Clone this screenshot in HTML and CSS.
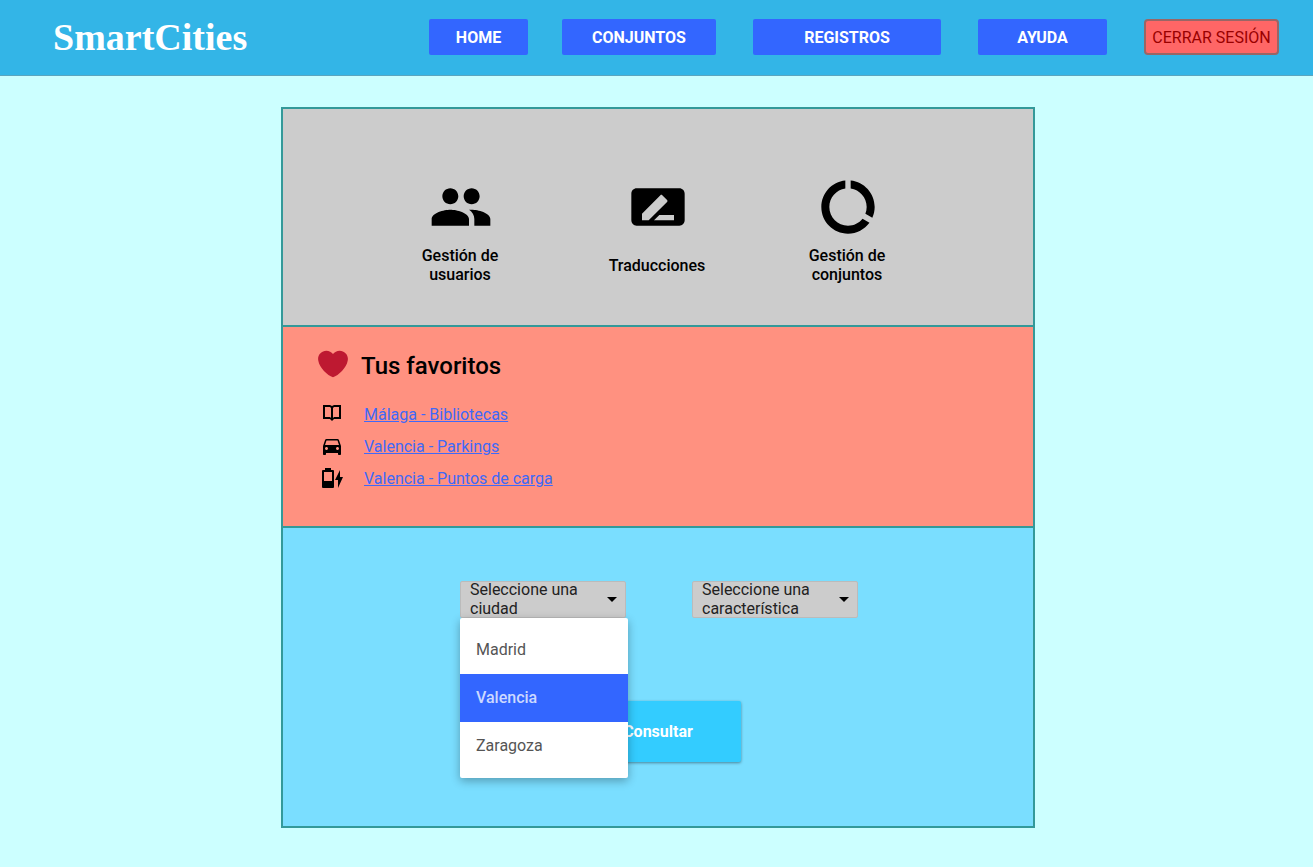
FILE: index.html
```html
<!DOCTYPE html>
<html lang="es">
<head>
<meta charset="utf-8">
<meta name="viewport" content="width=device-width, initial-scale=1">
<title>SmartCities</title>
<link rel="stylesheet" href="styles.css">
</head>
<body>
<header class="topbar">
  <h1 class="brand">SmartCities</h1>
  <nav class="nav">
    <div class="nav-group">
      <button class="nav-btn nav-home" type="button">HOME</button>
      <button class="nav-btn nav-sets" type="button">CONJUNTOS</button>
    </div>
    <button class="nav-btn nav-records" type="button">REGISTROS</button>
    <button class="nav-btn nav-help" type="button">AYUDA</button>
    <button class="logout" type="button">CERRAR SESIÓN</button>
  </nav>
</header>
<main class="page">
  <div class="board">
    <section class="tools">
      <div class="tool">
        <svg class="tool-icon" viewBox="0 0 24 24" aria-hidden="true"><path d="M16 11c1.660 0 2.990-1.340 2.990-3S17.660 5 16 5s-3 1.340-3 3 1.340 3 3 3zm-8 0c1.660 0 2.990-1.340 2.990-3S9.660 5 8 5 5 6.340 5 8s1.340 3 3 3zm0 2c-2.330 0-7 1.170-7 3.500V19h14v-2.500c0-2.330-4.670-3.500-7-3.500zm8 0c-.29 0-.62.02-.97.05 1.160.84 1.970 1.970 1.970 3.450V19h6v-2.500c0-2.330-4.670-3.500-7-3.500z"/></svg>
        <span class="tool-label">Gestión de usuarios</span>
      </div>
      <div class="tool">
        <svg class="tool-icon" viewBox="0 0 24 24" aria-hidden="true"><path fill-rule="evenodd" d="M4 5h16c1.100 0 2 .9 2 2v10c0 1.100-.9 2-2 2H4c-1.100 0-2-.9-2-2V7c0-1.100.9-2 2-2zM6 17h2.500l6.900-6.900c.2-.2.2-.5 0-.7l-1.800-1.800c-.2-.2-.5-.2-.7 0L6 14.500zM18 17v-2h-5.500l-2 2z"/></svg>
        <span class="tool-label">Traducciones</span>
      </div>
      <div class="tool">
        <svg class="tool-icon" viewBox="0 0 24 24" aria-hidden="true"><path d="M13 2.050v3.030c3.390.49 6 3.390 6 6.920 0 .9-.18 1.750-.48 2.540l2.600 1.530c.56-1.240.88-2.620.88-4.070 0-5.180-3.950-9.450-9-9.950zM12 19c-3.870 0-7-3.130-7-7 0-3.530 2.610-6.430 6-6.920V2.050c-5.060.5-9 4.760-9 9.950 0 5.520 4.470 10 9.990 10 3.310 0 6.240-1.610 8.060-4.090l-2.600-1.530C16.170 17.980 14.210 19 12 19z"/></svg>
        <span class="tool-label">Gestión de conjuntos</span>
      </div>
    </section>
    <section class="favorites">
      <div class="fav-head">
        <svg class="heart" viewBox="0 0 36 36" aria-hidden="true"><path d="M35.885 11.833c0-5.450-4.418-9.868-9.867-9.868-3.308 0-6.227 1.633-8.018 4.129-1.791-2.496-4.710-4.129-8.017-4.129-5.450 0-9.868 4.417-9.868 9.868 0 .772.098 1.520.266 2.241C1.751 22.587 11.216 31.568 18 34.034c6.783-2.466 16.249-11.447 17.617-19.959.17-.721.268-1.469.268-2.242z"/></svg>
        <h2 class="fav-title">Tus favoritos</h2>
      </div>
      <ul class="fav-list">
        <li class="fav"><svg class="fav-icon" viewBox="0 0 24 24" aria-hidden="true"><path fill-rule="evenodd" d="M3 3h7l2 1 2-1h7v14h-7l-2 2-2-2H3zM5 5v10h5l1 1V6l-1-1zM19 5h-5l-1 1v10l1-1h5z"/></svg><a class="fav-link" href="#">Málaga - Bibliotecas</a></li>
        <li class="fav"><svg class="fav-icon" viewBox="0 0 24 24" aria-hidden="true"><path d="M18.920 6.010C18.720 5.420 18.160 5 17.500 5h-11c-.66 0-1.210.42-1.420 1.010L3 12v8c0 .55.45 1 1 1h1c.55 0 1-.45 1-1v-1h12v1c0 .55.45 1 1 1h1c.55 0 1-.45 1-1v-8l-2.080-5.990zM6.500 16c-.83 0-1.500-.67-1.500-1.500S5.670 13 6.500 13s1.500.67 1.500 1.500S7.330 16 6.500 16zm11 0c-.83 0-1.500-.67-1.500-1.500s.67-1.500 1.500-1.500 1.500.67 1.500 1.500-.67 1.500-1.500 1.500zM5 11l1.500-4.500h11L19 11H5z"/></svg><a class="fav-link" href="#">Valencia - Parkings</a></li>
        <li class="fav"><svg class="fav-icon" viewBox="0 0 24 24" aria-hidden="true"><path fill-rule="evenodd" d="M5 2h6v2h2q1 0 1 1v16q0 1-1 1H3q-1 0-1-1V5q0-1 1-1h2zM4 6v9h8V6z"/><path d="M20 4v7h3l-5 11v-8h-3z"/></svg><a class="fav-link" href="#">Valencia - Puntos de carga</a></li>
      </ul>
    </section>
    <section class="query">
      <div class="pickers">
        <div class="picker">
          <label class="picker-label" for="city">Seleccione una ciudad</label>
          <select class="picker-select" id="city"><option></option><option>Madrid</option><option>Valencia</option><option>Zaragoza</option></select>
          <svg class="caret" viewBox="0 0 10 5" aria-hidden="true"><path d="M0 0h10L5 5z"/></svg>
          <ul class="menu" role="listbox" aria-label="Ciudades">
            <li class="menu-item" role="option" aria-selected="false">Madrid</li>
            <li class="menu-item menu-item-active" role="option" aria-selected="true">Valencia</li>
            <li class="menu-item" role="option" aria-selected="false">Zaragoza</li>
          </ul>
        </div>
        <div class="picker">
          <label class="picker-label" for="feature">Seleccione una característica</label>
          <select class="picker-select" id="feature"><option></option></select>
          <svg class="caret" viewBox="0 0 10 5" aria-hidden="true"><path d="M0 0h10L5 5z"/></svg>
        </div>
      </div>
      <button class="submit" type="button">Consultar</button>
    </section>
  </div>
</main>
</body>
</html>
```
FILE: styles.css
```css
* { box-sizing: border-box; }
body {
  margin: 0;
  min-height: 100vh;
  background: #ccffff;
  color: #000;
  font: 16px/19px Roboto, sans-serif;
}
button { font: inherit; cursor: pointer; }
ul { list-style: none; margin: 0; padding: 0; }

.topbar {
  display: flex;
  align-items: center;
  justify-content: space-between;
  height: 76px;
  padding: 0 34px 2px 53px;
  background: #33b5e7;
  border-bottom: 1px solid #5ba5bf;
}
.brand {
  margin: 0;
  color: #fff;
  font: bold 38px/44px "Liberation Serif", serif;
}
.nav { display: flex; gap: 37px; }
.nav-group { display: flex; gap: 34px; }
.nav-btn {
  height: 36px;
  padding: 1px 0 0;
  border: 0;
  border-radius: 2px;
  background: #3366ff;
  color: #fff;
  font-weight: 700;
}
.nav-home { width: 99px; }
.nav-sets { width: 154px; }
.nav-records { width: 188px; }
.nav-help { width: 129px; }
.logout {
  width: 135px;
  height: 36px;
  padding: 1px 0 0;
  border: 2px solid #996666;
  border-radius: 4px;
  background: #ff6666;
  color: #990000;
  white-space: nowrap;
}

.page { padding: 31px 0 39px 3px; }
.board {
  max-width: 754px;
  margin: 0 auto;
  border: 2px solid #339999;
}
.tools {
  display: grid;
  grid-template-columns: 200px 194px 186px;
  padding: 66px 0 41px 78px;
  background: #cccccc;
}
.tool {
  display: flex;
  flex-direction: column;
  align-items: center;
  gap: 7px;
}
.tool-icon { width: 64px; height: 64px; }
.tool-label {
  display: flex;
  align-items: center;
  width: 100px;
  min-height: 38px;
  padding-right: 2px;
  justify-content: center;
  text-align: center;
  font-weight: 500;
}

.favorites {
  padding: 22px 35px 32px;
  border-top: 2px solid #339999;
  background: #ff9180;
}
.fav-head { display: flex; gap: 13px; }
.heart { width: 30px; height: 30px; fill: #be1931; }
.fav-title {
  margin: 0;
  padding-top: 3px;
  font-size: 24px;
  font-weight: 500;
  line-height: 28px;
}
.fav-list { padding: 18px 0 0 2px; }
.fav {
  display: flex;
  align-items: center;
  gap: 20px;
  height: 32px;
}
.fav-icon { width: 24px; height: 24px; }
.fav-link { color: #4069f8; }

.query {
  display: flex;
  flex-direction: column;
  align-items: center;
  gap: 83px;
  padding: 53px 0 64px;
  border-top: 2px solid #339999;
  background: #7adeff;
}
.pickers { display: flex; gap: 66px; padding-left: 2px; }
.picker {
  position: relative;
  display: grid;
  grid-template-columns: 1fr 10px;
  align-items: center;
  align-content: center;
  width: 166px;
  height: 37px;
  padding: 0 8px 1px 9px;
  border: 1px solid #bbb;
  border-radius: 2px;
  background: #cccccc;
}
.picker-label { grid-area: 1 / 1; color: #222; font-weight: 400; }
.picker-select {
  grid-area: 1 / 1 / 2 / 3;
  appearance: none;
  width: 100%;
  height: 35px;
  border: 0;
  background: transparent;
  font: inherit;
}
.caret { grid-area: 1 / 2; width: 10px; height: 5px; pointer-events: none; }
.menu {
  position: absolute;
  top: 36px;
  left: -1px;
  width: 168px;
  padding: 8px 0;
  border-radius: 2px;
  background: #fff;
  box-shadow: 0 3px 10px rgba(0, 0, 0, 0.3);
}
.menu-item {
  padding: 14px 16px;
  line-height: 20px;
  color: #555;
  font-weight: 400;
}
.menu-item-active { background: #3366ff; color: #ccd9ff; font-weight: 500; }
.submit {
  width: 166px;
  height: 61px;
  padding: 0;
  border: 0;
  border-radius: 2px;
  background: #33ccff;
  color: #fff;
  font-weight: 700;
  box-shadow: 0 1px 3px rgba(0, 0, 0, 0.4);
}
```
